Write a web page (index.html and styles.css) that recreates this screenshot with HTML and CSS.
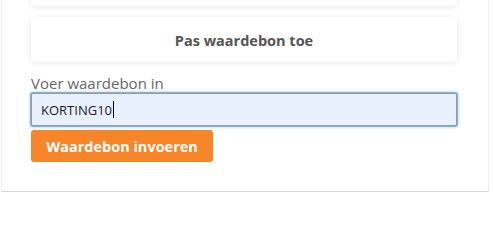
FILE: index.html
```html
<!DOCTYPE html>
<html lang="nl">
<head>
<meta charset="utf-8">
<title>Waardebon</title>
<link rel="stylesheet" href="styles.css">
</head>
<body>
<div class="panel">
  <div class="card card-top"></div>
  <div class="card card-voucher">Pas waardebon toe</div>
  <label class="label" for="code">Voer waardebon in</label>
  <div class="input"><span class="value">KORTING10</span><span class="caret"></span></div>
  <button class="btn" type="button">Waardebon invoeren</button>
</div>
</body>
</html>
```

FILE: styles.css
```css
html, body {
  margin: 0;
  padding: 0;
  background: #ffffff;
}
body {
  font-family: "Open Sans", "Liberation Sans", sans-serif;
}
.panel {
  box-sizing: border-box;
  width: 488px;
  margin-top: -39px;
  margin-left: 1px;
  border-left: 1px solid #f0f0f0;
  border-right: 1px solid #f0f0f0;
  border-bottom: 1px solid #d6d6d6;
  box-shadow: 0 1px 1px rgba(0,0,0,0.06);
  padding: 0 30px 29px 29px;
  display: flex;
  flex-direction: column;
  align-items: flex-start;
}
.card {
  box-sizing: border-box;
  width: 426px;
  background: #fff;
  border-radius: 4px;
  box-shadow: 0 1px 6px rgba(0,0,0,0.09);
}
.card-top {
  height: 45px;
}
.card-voucher {
  margin-top: 11px;
  height: 45px;
  display: flex;
  align-items: center;
  justify-content: center;
  font-weight: 700;
  font-size: 14.5px;
  color: #555555;
  padding-top: 1px;
}
.label {
  margin-top: 12px;
  font-size: 15px;
  line-height: 18px;
  color: #666666;
}
.input {
  box-sizing: border-box;
  margin-top: 1px;
  width: 426px;
  height: 33px;
  background: #e8f0fe;
  border: 1px solid #9a9a9a;
  border-radius: 2px;
  box-shadow: 0 0 0 1px #7fb6d9, 0 0 3px 1px rgba(80,160,210,0.6);
  display: flex;
  align-items: center;
  padding-left: 9px;
  font-size: 13px;
  color: #1a1a2a;
}
.caret {
  display: inline-block;
  width: 1px;
  height: 17px;
  background: #000;
  margin-left: 1px;
}
.btn {
  margin-top: 4px;
  width: 182px;
  height: 32px;
  border: none;
  border-radius: 3px;
  background: #f7852a;
  color: #ffffff;
  font-family: inherit;
  font-weight: 700;
  font-size: 14.5px;
  padding: 0;
  cursor: pointer;
}
```
